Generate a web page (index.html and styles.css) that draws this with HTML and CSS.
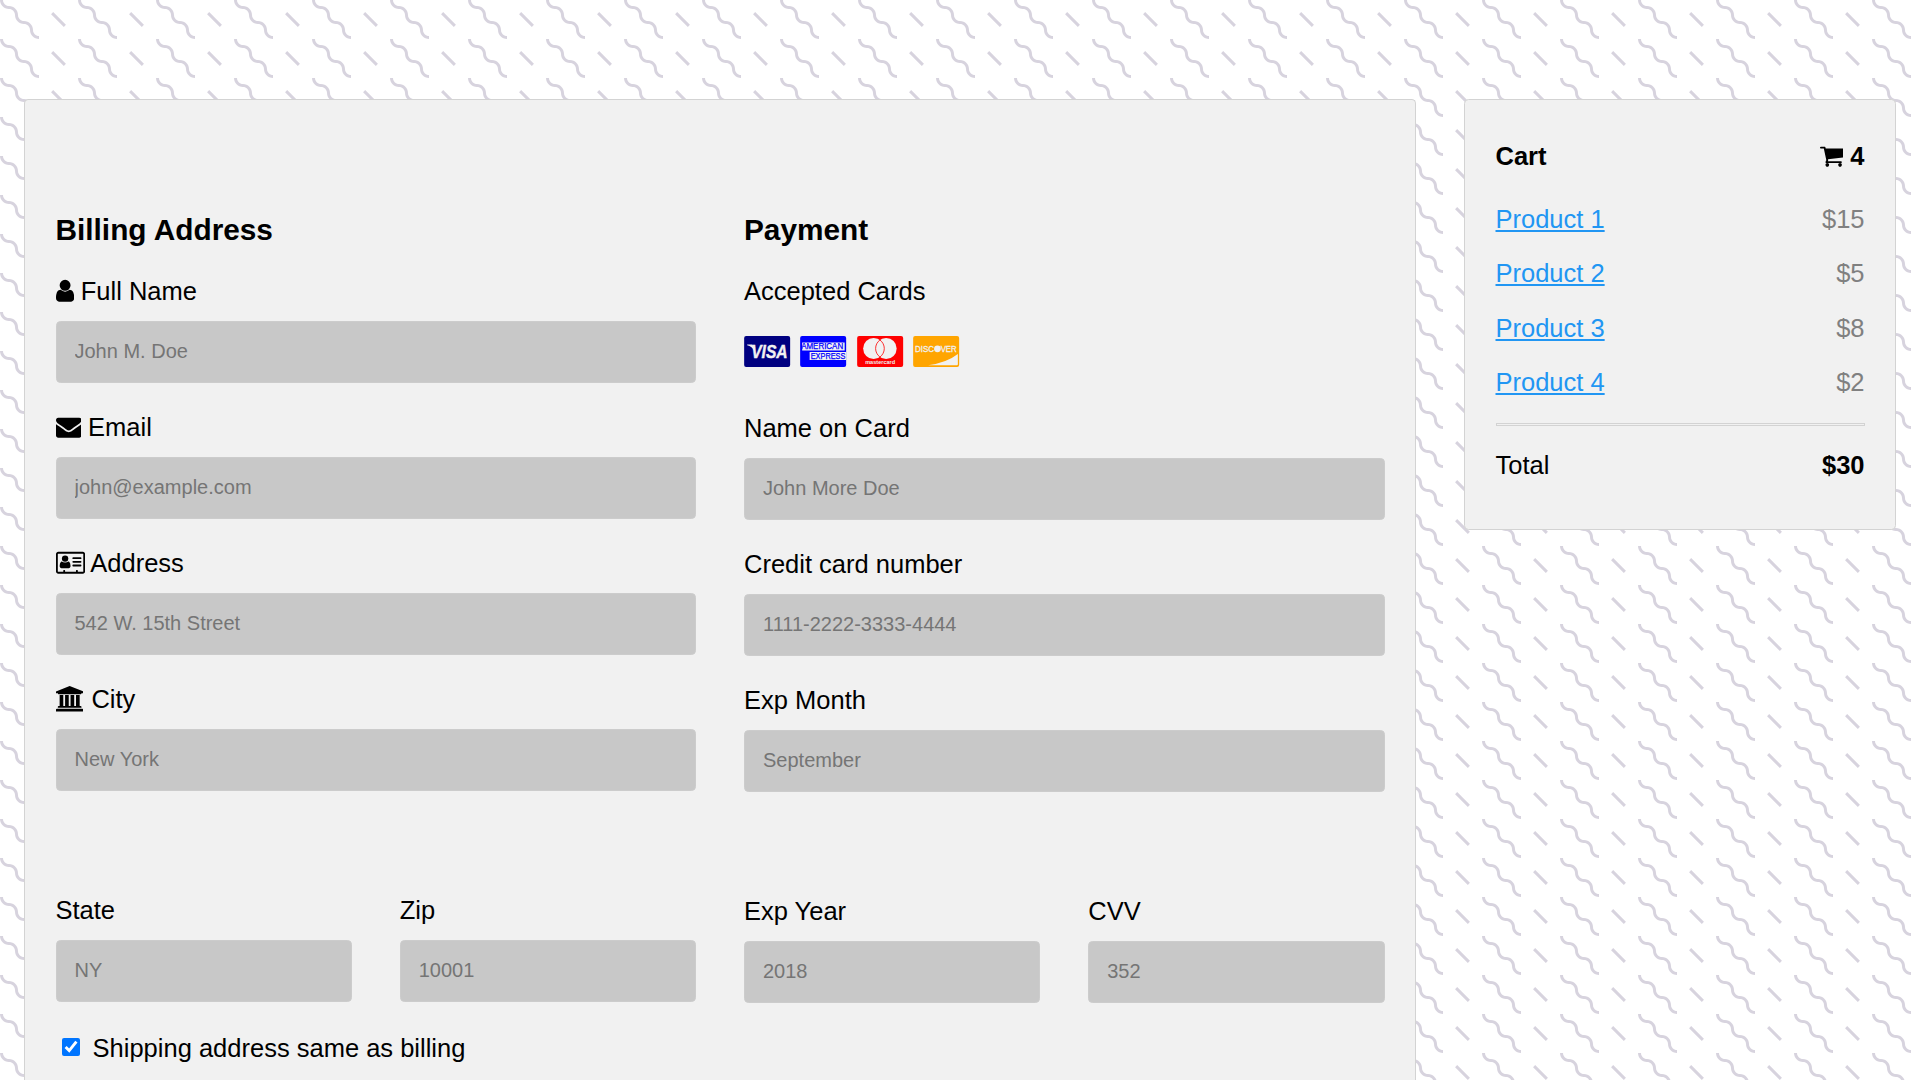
FILE: index.html
```html
<!DOCTYPE html>
<html lang="en">
<head>
<meta charset="utf-8">
<title>Checkout</title>
<link rel="stylesheet" href="styles.css">
</head>
<body>
<main class="page">
  <form class="panel checkout">
    <section class="column">
      <h3>Billing Address</h3>
      <label for="fname"><svg class="icon user" viewBox="256 0 1280 1792"><path d="M1536 1399q0 109-62.5 187t-150.5 78h-854q-88 0-150.5-78t-62.5-187q0-85 8.5-160.5t31.5-152 58.5-131 94-89 134.5-34.5q131 128 313 128t313-128q76 0 134.5 34.5t94 89 58.5 131 31.5 152 8.5 160.5zm-256-887q0 159-112.5 271.5t-271.5 112.5-271.5-112.5-112.5-271.5 112.5-271.5 271.5-112.5 271.5 112.5 112.5 271.5z"/></svg> Full Name</label>
      <input type="text" id="fname" placeholder="John M. Doe">
      <label for="email"><svg class="icon envelope" viewBox="0 0 1792 1792"><path d="M1792 710v794q0 66-47 113t-113 47h-1472q-66 0-113-47t-47-113v-794q44 49 101 87 362 246 497 345 57 42 92.5 65.5t94.5 48 110 24.5h2q51 0 110-24.5t94.5-48 92.5-65.5q170-123 498-345 57-39 100-87zm0-294q0 79-49 151t-122 123q-376 261-468 325-10 7-42.5 31t-54 38.5-52 32.5-57.5 27-50 9h-2q-23 0-50-9t-57.5-27-52-32.5-54-38.5-42.5-31q-91-64-262-182.5t-205-142.5q-62-42-117-115.5t-55-136.5q0-78 41.5-130t118.5-52h1472q65 0 112.5 47t47.5 113z"/></svg> Email</label>
      <input type="text" id="email" placeholder="john@example.com">
      <label for="adr"><svg class="icon address-card" viewBox="0 0 2048 1792"><path fill-rule="evenodd" d="M160 128h1728q66 0 113 47t47 113v1216q0 66-47 113t-113 47h-1728q-66 0-113-47t-47-113v-1216q0-66 47-113t113-47zm0 128q-32 0-32 32v1216q0 32 32 32h352v-96q0-32 32-32h64q32 0 32 32v96h768v-96q0-32 32-32h64q32 0 32 32v96h352q32 0 32-32v-1216q0-32-32-32z"/><path d="M1024 1131q0 64-37 106t-91 42h-512q-54 0-91-42t-37-106q0-213 98-301 25-22 60-22 80 76 226 76t226-76q35 0 60 22 98 88 98 301z"/><circle cx="640" cy="604" r="225"/><path d="M1216 512h512q64 0 64 64t-64 64h-512q-64 0-64-64t64-64zm0 256h512q64 0 64 64t-64 64h-512q-64 0-64-64t64-64zm0 256h512q64 0 64 64t-64 64h-512q-64 0-64-64t64-64z"/></svg> Address</label>
      <input type="text" id="adr" placeholder="542 W. 15th Street">
      <label for="city"><svg class="icon institution" viewBox="0 128 1920 1792"><path d="M960 128l960 384v128h-128q0 26-20.5 45t-48.5 19h-1526q-28 0-48.5-19t-20.5-45h-128v-128zm-704 640h256v768h128v-768h256v768h128v-768h256v768h128v-768h256v768h59q28 0 48.5 19t20.5 45v64h-1664v-64q0-26 20.5-45t48.5-19h59v-768zm1595 960q28 0 48.5 19t20.5 45v128h-1920v-128q0-26 20.5-45t48.5-19h1782z"/></svg> City</label>
      <input type="text" id="city" placeholder="New York">
      <div class="split">
        <div><label for="state">State</label><input type="text" id="state" placeholder="NY"></div>
        <div><label for="zip">Zip</label><input type="text" id="zip" placeholder="10001"></div>
      </div>
      <label class="same"><input type="checkbox" checked> Shipping address same as billing</label>
    </section>
    <section class="column">
      <h3>Payment</h3>
      <label>Accepted Cards</label>
      <div class="cards">
        <svg viewBox="0 0 46 31"><rect class="visa" width="46" height="31" rx="2"/><path class="ink" d="M3 8.5h5l3 3-1 3q-2-4-7-5.3z"/><text class="ink visa-name" x="7" y="22" textLength="36.5" lengthAdjust="spacingAndGlyphs">VISA</text></svg>
        <svg viewBox="0 0 46 31"><rect class="amex" width="46" height="31" rx="2"/><path class="ink" d="M2 6.5h42.5v8H2zM9.5 16h36.5v8H9.5z"/><text class="amex-name" x="1" y="13.3" textLength="42" lengthAdjust="spacingAndGlyphs">AMERICAN</text><text class="amex-name" x="10.5" y="22.9" textLength="34.8" lengthAdjust="spacingAndGlyphs">EXPRESS</text></svg>
        <svg viewBox="0 0 46 31"><rect class="master" width="46" height="31" rx="2"/><circle class="ink" cx="16.5" cy="12.5" r="10.5"/><circle class="ink" cx="29" cy="12.5" r="10.5"/><path class="seam" d="M22.8 4a10.5 10.5 0 0 1 0 17a10.5 10.5 0 0 1 0-17z"/><text class="ink master-name" x="8" y="28" textLength="30" lengthAdjust="spacingAndGlyphs">mastercard</text></svg>
        <svg viewBox="0 0 46 31"><rect class="discover" width="46" height="31" rx="2"/><path class="ink" d="M15 29.3Q34 26.5 44.7 18v10.3q0 1-1 1z"/><text class="ink discover-name" x="1.8" y="15.7" textLength="19" lengthAdjust="spacingAndGlyphs">DISC</text><circle class="ink" cx="24.3" cy="12.8" r="3.4"/><text class="ink discover-name" x="27.5" y="15.7" textLength="16" lengthAdjust="spacingAndGlyphs">VER</text></svg>
      </div>
      <label for="cname">Name on Card</label>
      <input type="text" id="cname" placeholder="John More Doe">
      <label for="ccnum">Credit card number</label>
      <input type="text" id="ccnum" placeholder="1111-2222-3333-4444">
      <label for="expmonth">Exp Month</label>
      <input type="text" id="expmonth" placeholder="September">
      <div class="split">
        <div><label for="expyear">Exp Year</label><input type="text" id="expyear" placeholder="2018"></div>
        <div><label for="cvv">CVV</label><input type="text" id="cvv" placeholder="352"></div>
      </div>
    </section>
  </form>
  <aside class="panel cart">
    <h4><span>Cart</span><span><svg class="icon basket" viewBox="64 0 1664 1792"><path d="M704 1536q0 52-38 90t-90 38-90-38-38-90 38-90 90-38 90 38 38 90zm896 0q0 52-38 90t-90 38-90-38-38-90 38-90 90-38 90 38 38 90zm128-1088v512q0 24-16.5 42.5t-40.5 21.5l-1044 122q13 60 13 70 0 16-24 64h920q26 0 45 19t19 45-19 45-45 19h-1024q-26 0-45-19t-19-45q0-11 8-31.5t16-36 21.5-40 15.5-29.5l-177-823h-204q-26 0-45-19t-19-45 19-45 45-19h256q16 0 28.5 6.5t19.5 15.5 13 24.5 8 26 5.5 29.5 4.5 26h1201q26 0 45 19t19 45z"/></svg> 4</span></h4>
    <p><a href="#">Product 1</a><span class="price">$15</span></p>
    <p><a href="#">Product 2</a><span class="price">$5</span></p>
    <p><a href="#">Product 3</a><span class="price">$8</span></p>
    <p><a href="#">Product 4</a><span class="price">$2</span></p>
    <hr>
    <p><span>Total</span><b>$30</b></p>
  </aside>
</main>
</body>
</html>
```
FILE: styles.css
```css
* { box-sizing: border-box; }

body {
  margin: 0;
  height: 100vh;
  overflow: hidden;
  font: 25.5px/29px Arial, "Liberation Sans", sans-serif;
  color: #000;
  background-color: #fff;
  background-image: url("data:image/svg+xml,%3Csvg xmlns='http://www.w3.org/2000/svg' width='78' height='39' viewBox='0 0 52 26'%3E%3Cpath fill='%239C92AC' fill-opacity='.4' d='M10 10c0-2.21-1.79-4-4-4-3.314 0-6-2.686-6-6h2c0 2.21 1.79 4 4 4 3.314 0 6 2.686 6 6 0 2.21 1.79 4 4 4 3.314 0 6 2.686 6 6 0 2.21 1.79 4 4 4v2c-3.314 0-6-2.686-6-6 0-2.21-1.79-4-4-4-3.314 0-6-2.686-6-6zm25.464-1.95l8.486 8.486-1.414 1.414-8.486-8.486 1.414-1.414z'/%3E%3C/svg%3E");
}

.page {
  display: flex;
  align-items: flex-start;
  gap: 48px;
  padding: 99px 24px 0;
}

.panel {
  background: #f1f1f1;
  border: 1px solid #d3d3d3;
  border-radius: 4.5px;
  padding: 7.5px 30.5px 22.5px;
}

/* Checkout form */
.checkout {
  flex: 1;
  display: flex;
  gap: 48px;
  height: calc(100vh - 99px);
  border-bottom: 0;
  border-radius: 4.5px 4.5px 0 0;
  padding: 113px 30.5px 0;
}

.column { flex: 1; min-width: 0; }

h3 {
  margin: 0 0 30px;
  font-size: 29.8px;
  line-height: 34px;
}

label { display: block; margin-bottom: 15px; }

.icon {
  display: inline-block;
  height: 25.5px;
  vertical-align: -3.64px;
  fill: currentColor;
}
.user { width: 18.2px; }
.envelope { width: 25.5px; }
.address-card { width: 29.1px; }
.institution { width: 27.3px; margin-right: 1.5px; }
.basket { width: 23.7px; }

input[type="text"] {
  display: block;
  width: 100%;
  height: 62px;
  margin: 0 0 30px;
  padding: 17px 18px 19px;
  border: 1px solid #ccc;
  border-radius: 4.5px;
  background: #c8c8c8;
  font: 20px/24px Arial, "Liberation Sans", sans-serif;
}
input::placeholder { color: #757575; }

.split { display: flex; gap: 48px; padding-top: 75px; }
.split > div { flex: 1; min-width: 0; }

.same { padding-top: 2px; margin-bottom: 0; }
.same input {
  width: 18px;
  height: 18px;
  margin: 4px 5.5px 4px 6.5px;
  vertical-align: 1px;
}

.cards {
  display: flex;
  gap: 10px;
  padding: 15px 0 47px;
}
.cards svg { width: 46.3px; height: 31px; overflow: visible; }
.cards text { font-family: "Liberation Sans", Arial, sans-serif; font-weight: bold; }
.ink { fill: #f1f1f1; }
.visa { fill: navy; }
.amex { fill: blue; }
.master { fill: red; }
.discover { fill: orange; }
.visa-name { font-size: 19px; font-style: italic; stroke: #f1f1f1; stroke-width: .4px; }
.cards .amex-name { font-size: 8.5px; font-weight: normal; fill: blue; stroke: blue; stroke-width: .25px; }
.seam { fill: none; stroke: red; stroke-width: .8px; }
.master-name { font-size: 6px; }
.cards .discover-name { font-size: 8.5px; font-weight: normal; stroke: #f1f1f1; stroke-width: .3px; }

/* Cart summary */
.cart { width: 432px; height: 431px; }
.cart h4, .cart p { display: flex; justify-content: space-between; }
.cart h4 { margin: 34px 0; font-size: 25.5px; }
.cart p { margin: 25.5px 0; }
.cart a { color: #2196f3; }
.price { color: grey; }
hr { height: 3px; margin: 25.5px 0; border: 1px solid #d3d3d3; }
```
